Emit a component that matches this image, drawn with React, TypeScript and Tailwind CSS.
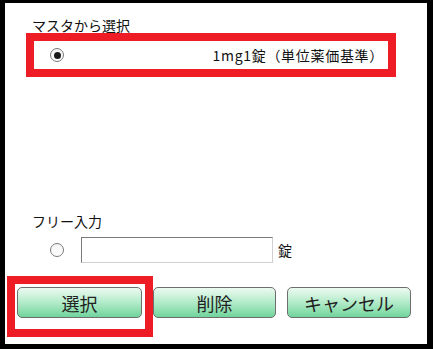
const font = "font-['MS_UI_Gothic','Noto_Sans_CJK_JP',sans-serif]";

function Radio({ checked }: { checked?: boolean }) {
  return (
    <span className="flex h-[14px] w-[14px] shrink-0 items-center justify-center rounded-full border border-[#7a7a7a] bg-gradient-to-b from-[#f4f4f4] to-white">
      {checked && <span className="h-[7px] w-[7px] rounded-full bg-[#1a1a1a]" />}
    </span>
  );
}

function Btn({ label, w }: { label: string; w: string }) {
  return (
    <button
      className={`flex h-[31px] ${w} items-center justify-center rounded-[5px] border border-[#6e6e6e] bg-gradient-to-b from-[#ecfaf1] via-[#b2ebc9] to-[#6fd49c] text-[18px] leading-none text-[#222]`}
    >
      {label}
    </button>
  );
}

export default function App() {
  return (
    <div className={`h-[349px] w-[433px] bg-black pb-[5px] pl-[5px] pr-[6px] pt-[3px] ${font}`}>
      <div className="relative flex h-full flex-col bg-white text-[14px] text-[#111]">
        {/* マスタから選択 */}
        <div className="ml-[27px] mt-[14px] leading-[16px]">マスタから選択</div>
        <div className="ml-[21px] flex h-[44px] w-[370px] items-center border-[8px] border-[#ee1c25] pl-[16px] pr-[4px]">
          <Radio checked />
          <span className="ml-auto leading-none tracking-[0.7px]">1mg1錠（単位薬価基準）</span>
        </div>

        {/* フリー入力 */}
        <div className="ml-[27px] mt-[136px] leading-[16px]">フリー入力</div>
        <div className="ml-[45px] mt-[8px] flex h-[26px] items-center">
          <Radio />
          <input
            className="ml-[17px] h-[26px] w-[192px] border border-b-[#d0d0d0] border-l-[#7a7a7a] border-r-[#d0d0d0] border-t-[#7a7a7a] outline-none"
            type="text"
          />
          <span className="ml-[5px] leading-none">錠</span>
        </div>

        {/* buttons */}
        <div className="ml-[12px] mt-[24px] flex gap-[11px]">
          <Btn label="選択" w="w-[125px]" />
          <Btn label="削除" w="w-[123px]" />
          <Btn label="キャンセル" w="w-[124px]" />
        </div>

        {/* 選択ボタンの枠 */}
        <div className="pointer-events-none absolute left-[2px] top-[273px] h-[61px] w-[146px] border-[8px] border-[#ee1c25]" />
      </div>
    </div>
  );
}
